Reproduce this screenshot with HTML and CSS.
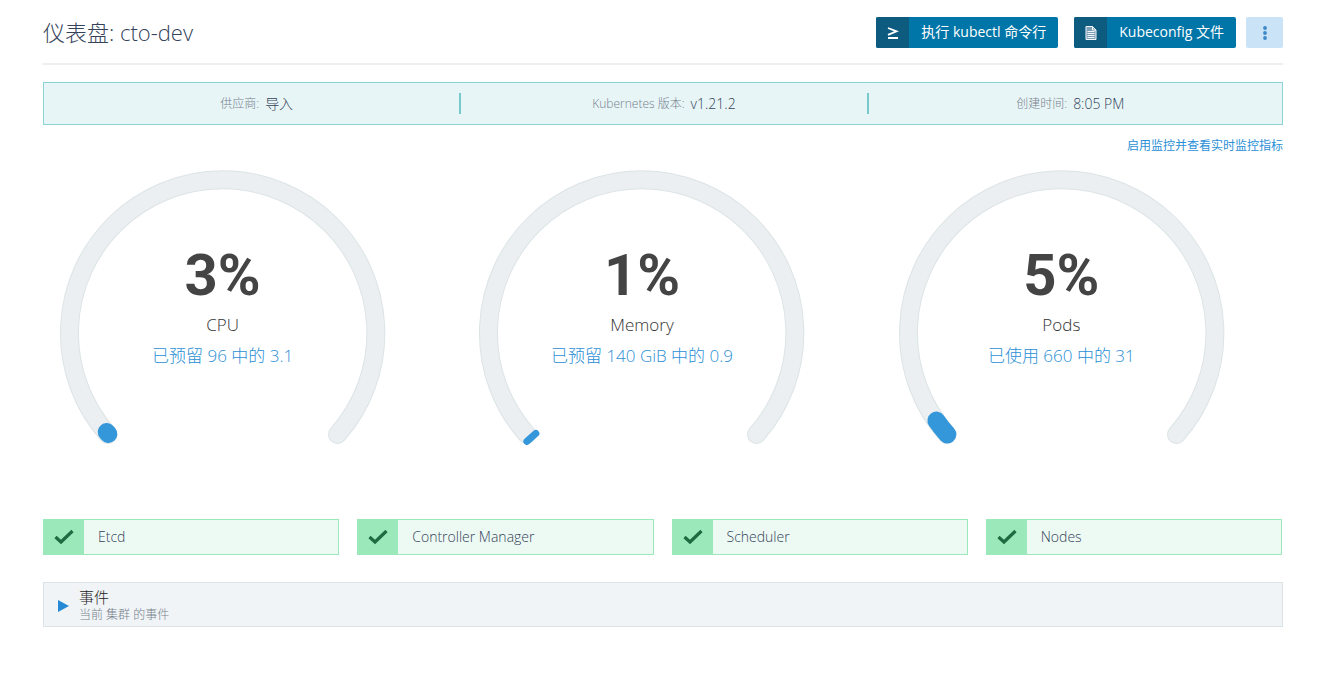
FILE: index.html
```html
<!DOCTYPE html>
<html lang="zh-CN">
<head>
<meta charset="utf-8">
<meta name="viewport" content="width=device-width, initial-scale=1">
<title>仪表盘: cto-dev</title>
<link rel="stylesheet" href="styles.css">
</head>
<body>
<main class="page">
  <header class="header">
    <h1 class="title">仪表盘: cto-dev</h1>
    <div class="actions">
      <button class="btn" type="button">
        <span class="btn-icon"><svg width="12" height="14" viewBox="0 0 12 14" fill="none" stroke="currentColor" stroke-width="1.800"><path d="M1 2l8.500 3.300L1 8.800M1 12h10"/></svg></span>
        <span class="btn-text">执行 kubectl 命令行</span>
      </button>
      <button class="btn" type="button">
        <span class="btn-icon"><svg width="12" height="14" viewBox="0 0 12 14"><path d="M1 .5h6.500L11 4v9.500H1z" fill="#7d9fb8" stroke="#f2f7fb"/><path d="M7.500 .5V4H11M2.500 5.500h7M2.500 7.500h7M2.500 9.500h7M2.500 11.500h7" fill="none" stroke="#f2f7fb"/></svg></span>
        <span class="btn-text">Kubeconfig 文件</span>
      </button>
      <button class="more" type="button" aria-label="更多操作"><svg width="4" height="14" viewBox="0 0 4 14" fill="currentColor"><circle cx="2" cy="2" r="1.900"/><circle cx="2" cy="7" r="1.900"/><circle cx="2" cy="12" r="1.900"/></svg></button>
    </div>
  </header>

  <section class="info">
    <div class="info-item"><span class="info-label">供应商:</span><span>导入</span></div>
    <div class="info-item"><span class="info-label">Kubernetes 版本:</span><span>v1.21.2</span></div>
    <div class="info-item"><span class="info-label">创建时间:</span><span>8:05 PM</span></div>
  </section>

  <a class="monitor-link" href="#">启用监控并查看实时监控指标</a>

  <section class="gauges">
    <div class="gauge">
      <svg class="dial" viewBox="0 0 360 300"><path class="track-edge" d="M65 277A153.500 153.500 0 1 1 295 277"/><path class="track" d="M65 277A153.500 153.500 0 1 1 295 277"/><path class="value" d="M65.500 276.500L63.800 274.500"/></svg>
      <div class="reading"><strong class="percent">3%</strong><span class="name">CPU</span><a class="detail" href="#">已预留 96 中的 3.1</a></div>
    </div>
    <div class="gauge">
      <svg class="dial" viewBox="0 0 360 300"><path class="track-edge" d="M65 277A153.500 153.500 0 1 1 295 277"/><path class="track" d="M65 277A153.500 153.500 0 1 1 295 277"/><path class="value value-small" d="M65 284L74 276"/></svg>
      <div class="reading"><strong class="percent">1%</strong><span class="name">Memory</span><a class="detail" href="#">已预留 140 GiB 中的 0.9</a></div>
    </div>
    <div class="gauge">
      <svg class="dial" viewBox="0 0 360 300"><path class="track-edge" d="M65 277A153.500 153.500 0 1 1 295 277"/><path class="track" d="M65 277A153.500 153.500 0 1 1 295 277"/><path class="value" d="M65.500 277A153.500 153.500 0 0 1 54.500 263"/></svg>
      <div class="reading"><strong class="percent">5%</strong><span class="name">Pods</span><a class="detail" href="#">已使用 660 中的 31</a></div>
    </div>
  </section>

  <section class="health">
    <div class="card"><span class="card-icon"><svg width="20" height="16" viewBox="0 0 20 16"><path d="M1.500 8l5.500 5L18.500 2" fill="none" stroke="currentColor" stroke-width="3.200"/></svg></span><span class="card-name">Etcd</span></div>
    <div class="card"><span class="card-icon"><svg width="20" height="16" viewBox="0 0 20 16"><path d="M1.500 8l5.500 5L18.500 2" fill="none" stroke="currentColor" stroke-width="3.200"/></svg></span><span class="card-name">Controller Manager</span></div>
    <div class="card"><span class="card-icon"><svg width="20" height="16" viewBox="0 0 20 16"><path d="M1.500 8l5.500 5L18.500 2" fill="none" stroke="currentColor" stroke-width="3.200"/></svg></span><span class="card-name">Scheduler</span></div>
    <div class="card"><span class="card-icon"><svg width="20" height="16" viewBox="0 0 20 16"><path d="M1.500 8l5.500 5L18.500 2" fill="none" stroke="currentColor" stroke-width="3.200"/></svg></span><span class="card-name">Nodes</span></div>
  </section>

  <button class="events" type="button" aria-expanded="false">
    <svg width="11" height="12" viewBox="0 0 11 12"><path d="M0 0l11 6L0 12z" fill="#2589d6"/></svg>
    <span class="events-text"><span class="events-title">事件</span><span class="events-sub">当前 集群 的事件</span></span>
  </button>
</main>
</body>
</html>
```
FILE: styles.css
```css
* { box-sizing: border-box; }
body {
  margin: 0;
  background: #fff;
  color: #34435a;
  font-family: "Open Sans", "Noto Sans CJK SC", sans-serif;
  font-size: 14px;
  font-weight: 300;
  line-height: 20px;
}
button { font: inherit; border: 0; padding: 0; cursor: pointer; }
a { color: #2b8fd6; text-decoration: none; }
.page { padding: 0 37px 48px 43px; }

.header {
  display: flex;
  justify-content: space-between;
  align-items: center;
  height: 65px;
  border-bottom: 2px solid #ebefef;
}
.title { margin: 0; font-size: 22px; font-weight: 300; line-height: 30px; }
.actions { display: flex; align-items: center; padding-top: 2px; }
.btn {
  display: flex;
  height: 31px;
  margin-right: 16px;
  border-radius: 2px;
  overflow: hidden;
  background: #0075a8;
  color: #fff;
  font-weight: 400;
  line-height: 30px;
}
.btn + .btn { margin-right: 10px; }
.btn-icon {
  display: flex;
  align-items: center;
  justify-content: center;
  width: 33px;
  height: 31px;
  background: #0d5c80;
}
.btn-text { padding: 0 12px; }
.more {
  display: flex;
  align-items: center;
  justify-content: center;
  width: 37px;
  height: 31px;
  border-radius: 2px;
  background: #cae3f7;
  color: #3d88c9;
}

.info {
  display: grid;
  grid-template-columns: 51fr 50fr 51fr;
  margin-top: 17px;
  padding: 10px 0;
  border: 1px solid #8bd3d4;
  background: #e7f5f6;
}
.info-item {
  display: flex;
  align-items: center;
  justify-content: center;
  gap: 6px;
  line-height: 21px;
}
.info-item:first-child { padding-left: 10px; }
.info-item:last-child { padding-right: 10px; }
.info-item + .info-item { border-left: 2px solid #77c9cb; }
.info-label { color: #77818e; font-size: 12px; }

.monitor-link {
  display: block;
  width: fit-content;
  margin: 11px 0 2px auto;
  font-size: 12px;
  font-weight: 400;
}

.gauges {
  display: grid;
  grid-template-columns: repeat(3, 1fr);
  gap: 60px;
  padding-right: 42px;
}
.gauge { display: grid; }
.dial, .reading { grid-area: 1 / 1; }
.dial { display: block; width: 100%; }
.dial path { fill: none; stroke-linecap: round; }
.dial .track-edge { stroke: #dce4e6; stroke-width: 19; }
.dial .track { stroke: #ebeff1; stroke-width: 17; }
.dial .value { stroke: #3497da; stroke-width: 18; }
.dial .value-small { stroke-width: 7; }
.reading {
  display: flex;
  flex-direction: column;
  align-items: center;
  justify-content: center;
  padding-bottom: 4px;
  font-size: 17px;
}
.percent {
  font-family: Roboto, sans-serif;
  font-size: 58px;
  font-weight: 700;
  line-height: 68px;
  color: #444;
}
.name { line-height: 32px; color: #333; }
.detail { line-height: 30px; }

.health {
  display: grid;
  grid-template-columns: repeat(4, 1fr);
  gap: 18px;
  margin-top: 62px;
  padding-right: 1px;
}
.card {
  display: flex;
  align-items: center;
  height: 36px;
  border: 1px solid #9be8bb;
  background: #edfaf3;
}
.card-icon {
  display: flex;
  align-items: center;
  justify-content: center;
  width: 40px;
  height: 34px;
  background: #9be8bb;
  color: #1d6b40;
}
.card-name { padding-left: 14px; }

.events {
  display: flex;
  align-items: center;
  gap: 10px;
  width: 100%;
  margin-top: 27px;
  padding: 5px 14px 3px;
  border: 1px solid #dce3e6;
  background: #f0f4f6;
  text-align: left;
}
.events-text { display: flex; flex-direction: column; }
.events-title { font-size: 15px; line-height: 19px; color: #222; }
.events-sub { font-size: 12px; line-height: 16px; color: #77818e; }
```
